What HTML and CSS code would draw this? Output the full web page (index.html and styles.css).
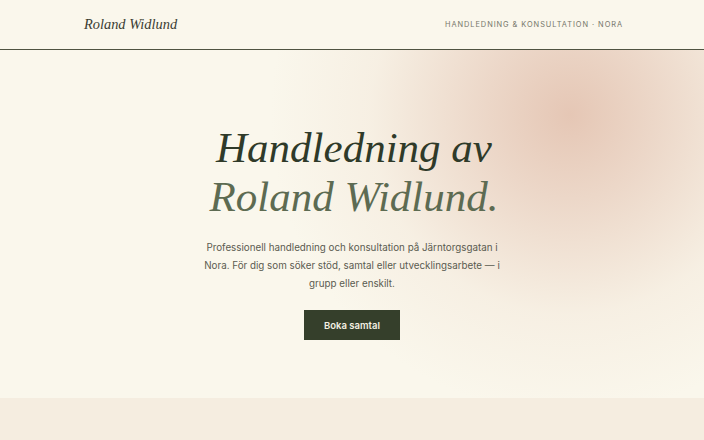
FILE: index.html
```html
<!DOCTYPE html>
<html lang="sv">
  <head>
    <meta charset="utf-8" />
    <meta name="viewport" content="width=device-width,initial-scale=1.0" />
    <title>Roland Widlund – Handledning &amp; konsultation</title>
    <link rel="stylesheet" href="styles.css">
  </head>

  <body>
    <!-- Header -->
    <header class="site-header">
      <a class="logo" href="#">Roland Widlund</a>
      <span class="tagline">Handledning &amp; konsultation · Nora</span>
    </header>

    <!-- Hero -->
    <section class="hero">
      <h1 class="hero-title">
        Handledning av<br />
        <span class="hero-name">Roland Widlund.</span>
      </h1>
      <p class="hero-text">
        Professionell handledning och konsultation på Järntorgsgatan i
        Nora. För dig som söker stöd, samtal eller utvecklingsarbete —&nbsp;i
        grupp eller enskilt.
      </p>
      <a class="button" href="#">Boka samtal</a>
    </section>

    <!-- Next section -->
    <section class="services"></section>
  </body>
</html>
```

FILE: styles.css
```css
body {
  margin: 0;
  background: #faf7ec;
  color: #55574b;
  font-family: Inter, "Noto Sans", sans-serif;
}

a {
  text-decoration: none;
}

/* header */
.site-header {
  height: 49px;
  padding: 0 81px 0 84px;
  display: flex;
  align-items: center;
  justify-content: space-between;
  border-bottom: 1px solid #4f5341;
  background: #faf7ec;
}
.logo {
  font-family: "Liberation Serif", serif;
  font-style: italic;
  font-size: 14.4px;
  color: #3b3d33;
  margin-top: -1px;
}
.tagline {
  font-size: 7.4px;
  letter-spacing: 0.95px;
  text-transform: uppercase;
  color: #75766a;
}

/* hero */
.hero {
  height: 348px;
  display: flex;
  flex-direction: column;
  align-items: center;
  text-align: center;
  background:
    radial-gradient(circle at 570px 65px, rgba(228, 196, 178, 0.95) 0, rgba(232, 206, 190, 0.75) 90px, rgba(240, 225, 210, 0.35) 200px, rgba(250, 247, 236, 0) 300px),
    #faf7ec;
}
.hero-title {
  margin: 73px 0 0 4px;
  font-family: "Liberation Serif", serif;
  font-style: italic;
  font-weight: normal;
  font-size: 43px;
  line-height: 49px;
  color: #2f3a29;
}
.hero-name {
  color: #5d6b52;
}
.hero-text {
  width: 306px;
  margin: 18px 0 0;
  font-size: 9.8px;
  line-height: 18px;
  color: #5a5b50;
}
.button {
  margin-top: 17px;
  width: 96px;
  height: 30px;
  display: flex;
  align-items: center;
  justify-content: center;
  background: #353f2b;
  color: #f3efe2;
  font-size: 9.5px;
  font-weight: 600;
}

.services {
  height: 60px;
  background: #f5ede0;
}
```
